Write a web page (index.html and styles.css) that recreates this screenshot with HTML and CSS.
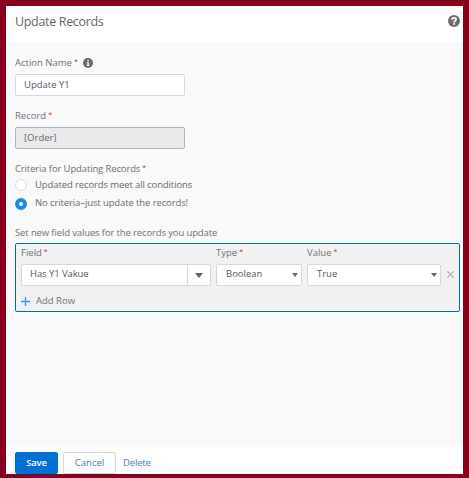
FILE: index.html
```html
<!DOCTYPE html>
<html lang="en">
<head>
<meta charset="utf-8">
<title>Update Records</title>
<link rel="stylesheet" href="styles.css">
</head>
<body>
<main class="panel">
  <header class="header">
    <h1>Update Records</h1>
    <svg class="help" viewBox="0 0 12 12"><circle cx="6" cy="6" r="6" fill="#6b6b6d"/><path d="M3.9 4.8C3.9 2.3 8.1 2.3 8.1 4.6C8.1 5.9 6.1 5.9 6.1 7.4" fill="none" stroke="#fff" stroke-width="1.7"/><rect x="5.2" y="8.2" width="1.8" height="1.6" fill="#fff"/></svg>
  </header>
  <section class="content">
    <div class="label action-label">Action Name<b>*</b><svg class="info" viewBox="0 0 10 10"><circle cx="5" cy="5" r="5" fill="#6b6b6d"/><path d="M4.2 2h1.6v1.3H4.2zM3.8 4.2h2v3h.6v.9H3.7v-.9h.6V5.1h-.5z" fill="#fff"/></svg></div>
    <div class="input">Update Y1</div>
    <div class="label record-label">Record<b>*</b></div>
    <div class="input disabled">[Order]</div>
    <div class="label criteria-label">Criteria for Updating Records<b>*</b></div>
    <div class="option"><span class="radio"></span><span>Updated records meet all conditions</span></div>
    <div class="option second"><span class="radio checked"></span><span>No criteria–just update the records!</span></div>
    <div class="label set-label">Set new field values for the records you update</div>
    <div class="fields">
      <div class="row">
        <div class="field">
          <div class="label">Field<b>*</b></div>
          <div class="input combo"><span>Has Y1 Vakue</span><i class="toggle"><i class="arrow gray"></i></i></div>
        </div>
        <div class="type">
          <div class="label">Type<b>*</b></div>
          <div class="input select"><span>Boolean</span><i class="arrow"></i></div>
        </div>
        <div class="value">
          <div class="label">Value<b>*</b></div>
          <div class="input select"><span>True</span><i class="arrow"></i></div>
        </div>
        <svg class="remove" viewBox="0 0 7 7"><path d="M.3.3l6.4 6.4M6.7.3L.3 6.7" stroke="#adadad" stroke-width="1.2"/></svg>
      </div>
      <div class="add"><svg class="plus" viewBox="0 0 9 9"><path d="M4.5 0v9M0 4.5h9" stroke="#4496dc" stroke-width="1.4"/></svg><span>Add Row</span></div>
    </div>
  </section>
  <footer class="footer">
    <span class="button save">Save</span>
    <span class="button cancel">Cancel</span>
    <span class="delete">Delete</span>
  </footer>
</main>
</body>
</html>
```
FILE: styles.css
```css
* { box-sizing: border-box; }
body {
  margin: 0;
  width: 469px;
  height: 478px;
  padding: 6px 6px 4px;
  background: #89001c;
  font: 9.5px/12px "Open Sans", "Noto Sans", sans-serif;
  color: #58595e;
  white-space: nowrap;
  overflow: hidden;
}
.panel { height: 468px; display: flex; flex-direction: column; background: #f9f9f9; }
.header {
  height: 36px;
  padding: 0 3px 0 9px;
  display: flex;
  justify-content: space-between;
  background: #fff;
}
h1 { margin: 7px 0 0; font-size: 12.5px; line-height: 18px; font-weight: 400; letter-spacing: -.33px; color: #65666a; }
.help { width: 12px; height: 12px; margin-top: 9px; }
.content { flex: 1; padding: 15px 3px 0 9px; }
.label { height: 12px; display: flex; color: #707176; }
.label b { margin-left: 2px; font-weight: 400; font-size: 7px; line-height: 10px; color: #c4342f; }
.info { width: 10px; height: 10px; margin: 1px 0 0 5px; }
.input {
  width: 170px;
  height: 22px;
  margin-top: 5px;
  padding: 0 8px;
  border: 1px solid #d8d8da;
  border-radius: 2px;
  background: #fff;
  line-height: 20px;
}
.input.disabled { background: #e9eaeb; border-color: #a8b7c7; color: #68696e; }
.record-label { margin-top: 14px; }
.criteria-label { margin-top: 14px; letter-spacing: -.13px; }
.option { height: 12px; margin-top: 4px; display: flex; align-items: center; gap: 8px; color: #68696e; letter-spacing: -.11px; }
.option.second { margin-top: 6px; }
.radio { width: 12px; height: 12px; border: 1px solid #dcdcde; border-radius: 50%; background: #fff; }
.radio.checked { border: 4px solid #1589ee; margin-top: 2px; }
.set-label { margin-top: 18px; letter-spacing: -.13px; }
.fields {
  width: 445px;
  height: 69px;
  margin-top: 4px;
  padding: 3px 5px 0;
  border: 1px solid #006dad;
  border-radius: 2px;
  background: #f1f1f1;
}
.row { display: flex; }
.row .input { width: 100%; line-height: 18px; }
.field { width: 190px; margin-right: 5px; }
.type { width: 86px; margin-right: 5px; }
.value { width: 134px; }
.combo, .select { display: flex; justify-content: space-between; align-items: center; }
.row .input span { margin-top: -2px; }
.row .combo { padding-right: 0; letter-spacing: -.08px; }
.row .select { padding: 0 3px 0 9px; }
.toggle { width: 23px; height: 20px; border-left: 1px solid #d8d8da; display: flex; align-items: center; justify-content: center; }
.arrow { width: 0; height: 0; border: 3.5px solid transparent; border-width: 4px 3.5px 0; border-top-color: #53698c; }
.arrow.gray { border-width: 5px 4px 0; border-top-color: #626366; }
.remove { width: 7px; height: 7px; margin: 24px 0 0 6px; }
.add { height: 12px; margin-top: 9px; display: flex; align-items: center; color: #707176; }
.plus { width: 9px; height: 9px; margin-right: 6px; }
.footer { height: 27px; padding: 5px 0 0 9px; display: flex; background: #fff; }
.button { height: 22px; border: 1px solid #d8d8da; border-radius: 2px; line-height: 20px; text-align: center; }
.save { width: 43px; margin-right: 5px; border-color: #0070d2; background: #0070d2; color: #fff; font-weight: 600; letter-spacing: -.2px; }
.cancel { width: 53px; margin-right: 7px; color: #4b78b5; }
.delete { line-height: 22px; color: #4382c9; letter-spacing: -.15px; }
```
